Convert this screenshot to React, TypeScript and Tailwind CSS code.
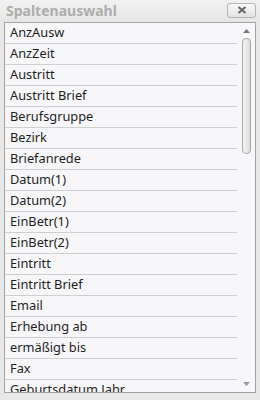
const columns = [
  "AnzAusw",
  "AnzZeit",
  "Austritt",
  "Austritt Brief",
  "Berufsgruppe",
  "Bezirk",
  "Briefanrede",
  "Datum(1)",
  "Datum(2)",
  "EinBetr(1)",
  "EinBetr(2)",
  "Eintritt",
  "Eintritt Brief",
  "Email",
  "Erhebung ab",
  "ermäßigt bis",
  "Fax",
  "Geburtsdatum Jahr",
];

const App = () => (
  <div className="w-[260px] h-[400px] bg-[#e8e8e8] flex flex-col overflow-hidden font-['Noto_Sans',sans-serif]">
    {/* title bar */}
    <div className="h-[22px] flex items-center justify-between pl-[6px] pr-[4px] bg-gradient-to-b from-[#f2f2f2] to-[#e6e6e6]">
      <span className="text-[14px] font-bold text-[#adadad] leading-none mb-[1px]">Spaltenauswahl</span>
      <button className="w-[29px] h-[15px] mb-[2px] rounded-[3px] border border-[#b4b4b4] bg-gradient-to-b from-[#fafafa] to-[#e2e2e2] flex items-center justify-center">
        <svg width="10" height="8" viewBox="0 0 10 8">
          <path d="M1.5 1 L8.5 7 M8.5 1 L1.5 7" stroke="#6a6a6a" strokeWidth="2.2" />
        </svg>
      </button>
    </div>

    {/* list panel */}
    <div className="mx-[4px] h-[371px] border border-[#a3a3a3] bg-[#f7f7f9] flex overflow-hidden">
      <div className="w-[232px] flex flex-col overflow-hidden">
        {columns.map((c) => (
          <div
            key={c}
            className="h-[21px] shrink-0 flex items-center pl-[5px] border-b border-[#cfcfcf] text-[12.8px] text-[#1e1e1e]"
          >
            {c}
          </div>
        ))}
      </div>
      <div className="flex-1 flex flex-col items-center pt-[6px] pb-[6px]">
        <svg width="7" height="4" viewBox="0 0 7 4">
          <path d="M0 4 L3.5 0 L7 4 Z" fill="#777" />
        </svg>
        <div className="w-[9px] h-[116px] mt-[5px] rounded-[4px] border border-[#a8a8a8] bg-gradient-to-r from-[#f4f4f4] to-[#dcdcdc]" />
        <div className="flex-1" />
        <svg width="7" height="4" viewBox="0 0 7 4">
          <path d="M0 0 L7 0 L3.5 4 Z" fill="#999" />
        </svg>
      </div>
    </div>
  </div>
);

export default App;
